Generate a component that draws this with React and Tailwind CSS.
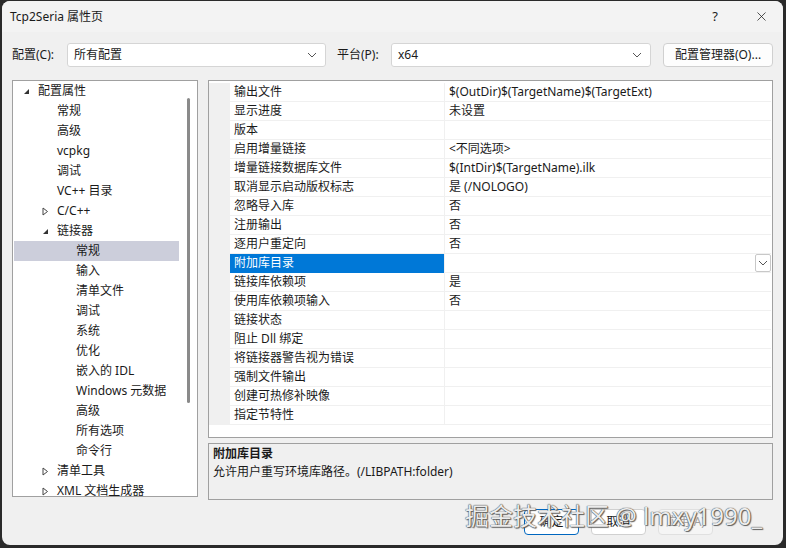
import { X } from "lucide-react";

const font = "font-['Noto_Sans','Noto_Sans_CJK_SC',sans-serif]";

const tree = [
  { label: "配置属性", level: 0, arrow: "open" },
  { label: "常规", level: 1 },
  { label: "高级", level: 1 },
  { label: "vcpkg", level: 1 },
  { label: "调试", level: 1 },
  { label: "VC++ 目录", level: 1 },
  { label: "C/C++", level: 1, arrow: "closed" },
  { label: "链接器", level: 1, arrow: "open" },
  { label: "常规", level: 2, selected: true },
  { label: "输入", level: 2 },
  { label: "清单文件", level: 2 },
  { label: "调试", level: 2 },
  { label: "系统", level: 2 },
  { label: "优化", level: 2 },
  { label: "嵌入的 IDL", level: 2 },
  { label: "Windows 元数据", level: 2 },
  { label: "高级", level: 2 },
  { label: "所有选项", level: 2 },
  { label: "命令行", level: 2 },
  { label: "清单工具", level: 1, arrow: "closed" },
  { label: "XML 文档生成器", level: 1, arrow: "closed" },
];

const props = [
  ["输出文件", "$(OutDir)$(TargetName)$(TargetExt)"],
  ["显示进度", "未设置"],
  ["版本", ""],
  ["启用增量链接", "<不同选项>"],
  ["增量链接数据库文件", "$(IntDir)$(TargetName).ilk"],
  ["取消显示启动版权标志", "是 (/NOLOGO)"],
  ["忽略导入库", "否"],
  ["注册输出", "否"],
  ["逐用户重定向", "否"],
  ["附加库目录", "", true],
  ["链接库依赖项", "是"],
  ["使用库依赖项输入", "否"],
  ["链接状态", ""],
  ["阻止 Dll 绑定", ""],
  ["将链接器警告视为错误", ""],
  ["强制文件输出", ""],
  ["创建可热修补映像", ""],
  ["指定节特性", ""],
];

function Chevron({ className = "" }) {
  return (
    <svg width="10" height="6" viewBox="0 0 10 6" className={className}>
      <path d="M1 1l4 4 4-4" fill="none" stroke="#555" strokeWidth="1" />
    </svg>
  );
}

function Arrow({ type }) {
  if (type === "open") {
    return (
      <svg width="7" height="7" viewBox="0 0 7 7">
        <path d="M6 1v5H1z" fill="#333" />
      </svg>
    );
  }
  return (
    <svg width="7" height="9" viewBox="0 0 7 9">
      <path d="M1 1l4.5 3.5L1 8z" fill="none" stroke="#444" strokeWidth="1" />
    </svg>
  );
}

function Combo({ value, width }) {
  return (
    <div
      className={`${width} h-[24px] bg-white border border-[#d5d5d5] rounded-[3px] flex items-center justify-between pl-[6px] pr-[8px]`}
    >
      <span>{value}</span>
      <Chevron />
    </div>
  );
}

export default function App() {
  return (
    <div className={`w-[786px] h-[548px] bg-[#2a2a2a] pt-px pl-[2px] pr-[3px] pb-[3px] ${font} text-[12px] text-[#1a1a1a]`}>
      <div className="relative w-full h-full bg-[#f0f0f0] rounded-[8px] flex flex-col overflow-hidden">
        {/* title bar */}
        <div className="h-[31px] flex items-center pl-[8px] bg-[#f3f3f3] shrink-0">
          <span>Tcp2Seria 属性页</span>
          <div className="ml-auto flex items-center">
            <span className="w-[46px] text-center text-[13px]">?</span>
            <span className="w-[46px] flex justify-center mr-[-1px]">
              <X size={15} strokeWidth={1.2} />
            </span>
          </div>
        </div>

        {/* config row */}
        <div className="flex items-center mt-[10px] pl-[10px] h-[25px]">
          <span className="w-[55px]">配置(C):</span>
          <Combo value="所有配置" width="w-[259px]" />
          <span className="ml-[11px] w-[54px]">平台(P):</span>
          <Combo value="x64" width="w-[260px]" />
          <div className="ml-[12px] w-[110px] h-[24px] bg-[#fdfdfd] border border-[#d0d0d0] rounded-[4px] flex items-center justify-center">
            配置管理器(O)...
          </div>
        </div>

        {/* main */}
        <div className="flex mt-[13px] pl-[10px] pr-[10px] gap-[10px] h-[420px]">
          {/* tree */}
          <div className="w-[186px] h-[417px] border border-[#a0a0a0] bg-white flex overflow-hidden">
            <div className="flex-1 pl-px">
              {tree.map((t, i) => (
                <div
                  key={i}
                  className={`h-[20px] flex items-center ${t.selected ? "bg-[#cccedb]" : ""}`}
                  style={{ paddingLeft: 9 + t.level * 19 }}
                >
                  <span className="w-[15px] flex items-center">
                    {t.arrow && <Arrow type={t.arrow} />}
                  </span>
                  <span>{t.label}</span>
                </div>
              ))}
            </div>
            <div className="w-[18px] flex justify-center">
              <div className="w-[3px] h-[305px] mt-[17px] bg-[#8a8a8a] rounded-full" />
            </div>
          </div>

          {/* right column */}
          <div className="flex-1 flex flex-col gap-[5px]">
            <div className="h-[359px] border border-[#a0a0a0] bg-white pt-[2px] pr-px">
              {props.map(([name, value, sel], i) => (
                <div key={i} className="flex h-[19px]">
                  <div className="w-[21px] bg-[#f0f0f0]" />
                  <div
                    className={`w-[214px] flex items-center pl-[4px] border-b ${
                      sel ? "bg-[#0078d7] text-white border-[#0078d7]" : "border-[#f0f0f0]"
                    }`}
                  >
                    {name}
                  </div>
                  <div className="w-px bg-[#f0f0f0]" />
                  <div className="flex-1 flex items-center pl-[4px] border-b border-[#f0f0f0]">
                    {value}
                    {sel && (
                      <div className="ml-auto w-[16px] h-[18px] border border-[#c8c8c8] rounded-[2px] bg-white flex items-center justify-center">
                        <Chevron />
                      </div>
                    )}
                  </div>
                </div>
              ))}
            </div>
            <div className="h-[57px] border border-[#a0a0a0] bg-[#f0f0f0] pl-[4px] pt-px leading-[18px]">
              <div className="font-bold">附加库目录</div>
              <div>允许用户重写环境库路径。(/LIBPATH:folder)</div>
            </div>
          </div>
        </div>

        {/* buttons */}
        <div className="flex justify-end pr-[70px] mt-[9px] gap-[12px]">
          <div className="w-[55px] h-[26px] border border-[#0067c0] rounded-[4px] bg-white flex items-center justify-center">
            确定
          </div>
          <div className="w-[55px] h-[26px] border border-[#d0d0d0] rounded-[4px] bg-white flex items-center justify-center">
            取消
          </div>
          <div className="w-[55px] h-[26px] border border-[#e0e0e0] rounded-[4px] bg-[#f5f5f5] text-[#a0a0a0] flex items-center justify-center">
            应用(A)
          </div>
        </div>

        {/* watermark */}
        <div className="absolute left-[463px] top-[498px] text-[24px] leading-[34px] text-[#ececec] [text-shadow:0_0_1px_#444,0_0_1px_#444,1px_1px_1px_#666] whitespace-nowrap">
          掘金技术社区 @ lmxy1990_
        </div>
      </div>
    </div>
  );
}
